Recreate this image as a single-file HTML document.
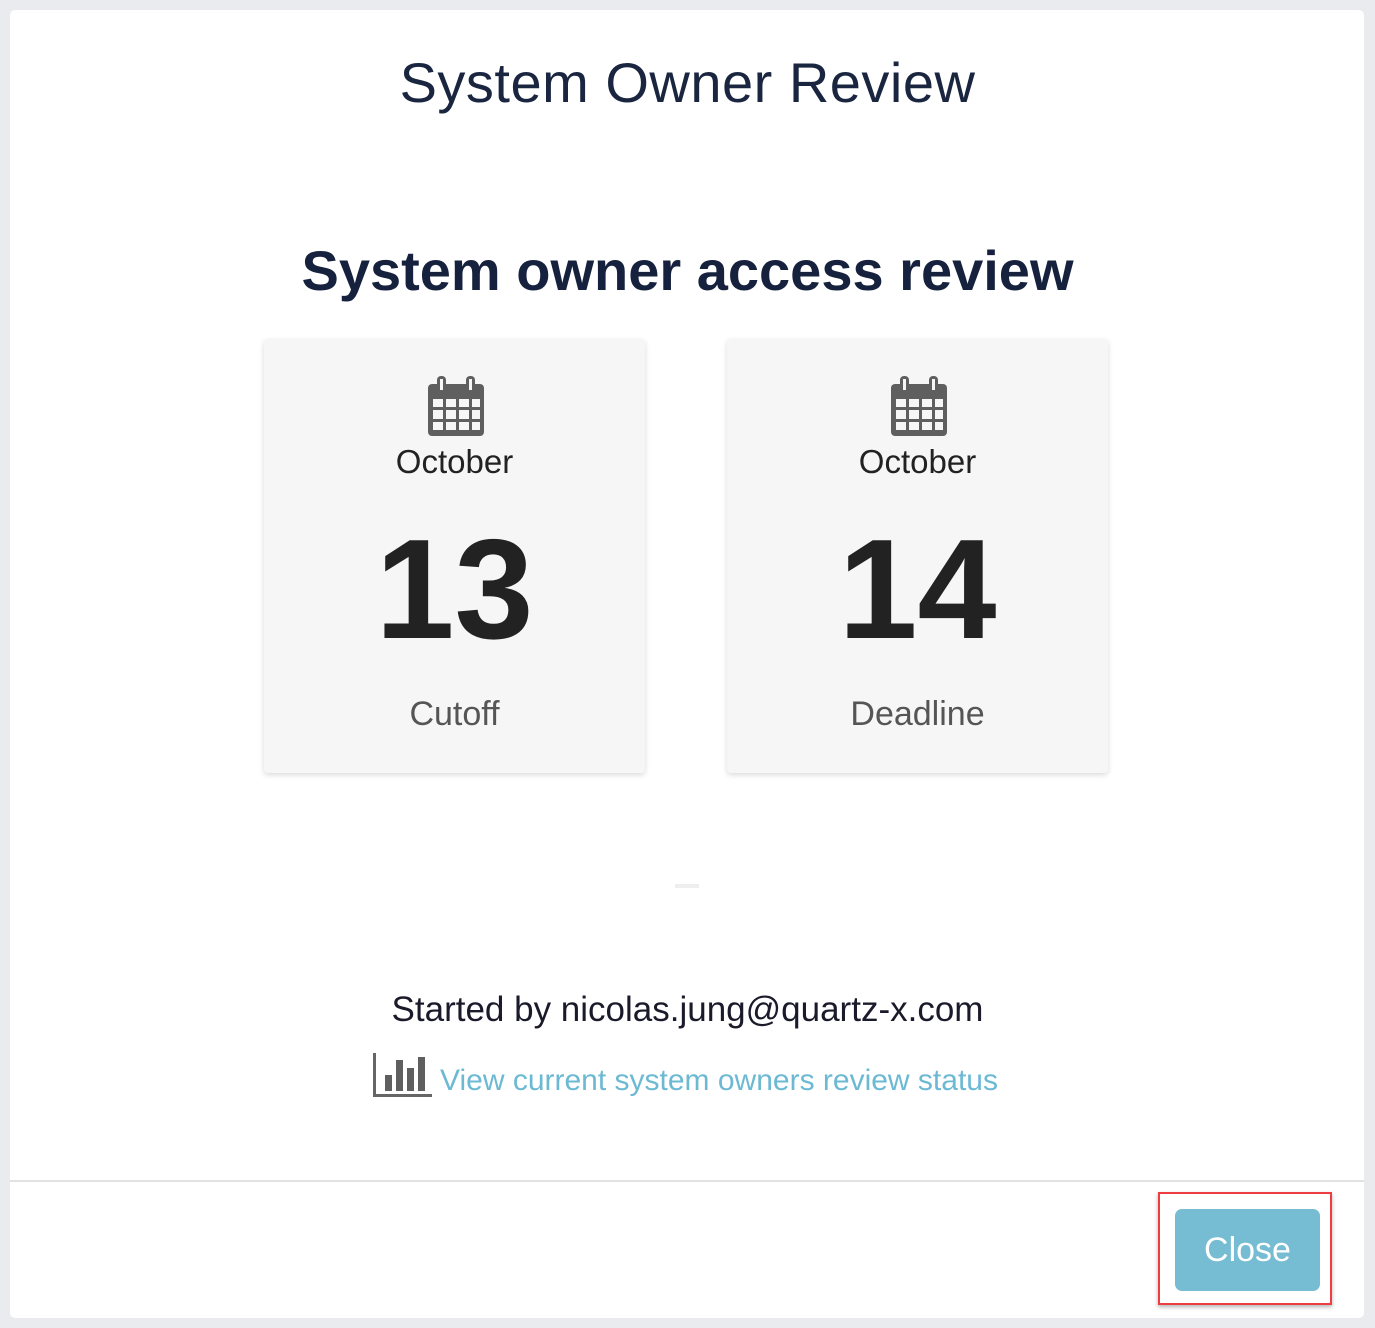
<!DOCTYPE html>
<html><head><style>
body{margin:0;width:1375px;height:1328px;background:#e9ebef;font-family:"Liberation Sans",sans-serif;position:relative;overflow:hidden}
.modal{position:absolute;left:10px;top:10px;width:1354px;height:1308px;background:#fff;border-radius:5px}
.abs{position:absolute}
.t1{left:0;width:1375px;text-align:center;top:50px;font-size:56px;color:#1a2540;font-weight:300;letter-spacing:0.5px}
.t2{left:0;width:1375px;text-align:center;top:238px;font-size:56px;color:#16213e;font-weight:bold}
.card{top:339px;width:381px;height:434px;background:#f6f6f6;border-radius:4px;box-shadow:0 2px 6px rgba(0,0,0,.15)}
.card .m{position:absolute;top:104px;width:100%;text-align:center;font-size:33px;color:#222}
.card .d{position:absolute;top:176px;width:100%;text-align:center;font-size:142px;font-weight:bold;color:#222;line-height:150px}
.card .l{position:absolute;top:356px;width:100%;text-align:center;font-size:34px;color:#555}
.card svg{position:absolute;left:164px;top:37px}
</style></head><body>
<div class="modal"></div>
<div class="abs t1">System Owner Review</div>
<div class="abs t2">System owner access review</div>
<div class="abs card" style="left:264px">
<svg width="56" height="60" viewBox="0 0 56 60"><rect x="0" y="8" width="56" height="52" rx="4" fill="#5f5f5f"/><rect x="9" y="0" width="9" height="17" rx="4" fill="#5f5f5f"/><rect x="38" y="0" width="9" height="17" rx="4" fill="#5f5f5f"/><rect x="12" y="3" width="3" height="11" fill="#f6f6f6"/><rect x="41" y="3" width="3" height="11" fill="#f6f6f6"/><g fill="#f6f6f6"><rect x="5" y="23" width="10" height="8"/><rect x="18" y="23" width="10" height="8"/><rect x="31" y="23" width="10" height="8"/><rect x="44" y="23" width="8" height="8"/><rect x="5" y="34" width="10" height="9"/><rect x="18" y="34" width="10" height="9"/><rect x="31" y="34" width="10" height="9"/><rect x="44" y="34" width="8" height="9"/><rect x="5" y="46" width="10" height="8"/><rect x="18" y="46" width="10" height="8"/><rect x="31" y="46" width="10" height="8"/><rect x="44" y="46" width="8" height="8"/></g></svg>
<div class="m">October</div><div class="d">13</div><div class="l">Cutoff</div></div>
<div class="abs card" style="left:727px">
<svg width="56" height="60" viewBox="0 0 56 60"><rect x="0" y="8" width="56" height="52" rx="4" fill="#5f5f5f"/><rect x="9" y="0" width="9" height="17" rx="4" fill="#5f5f5f"/><rect x="38" y="0" width="9" height="17" rx="4" fill="#5f5f5f"/><rect x="12" y="3" width="3" height="11" fill="#f6f6f6"/><rect x="41" y="3" width="3" height="11" fill="#f6f6f6"/><g fill="#f6f6f6"><rect x="5" y="23" width="10" height="8"/><rect x="18" y="23" width="10" height="8"/><rect x="31" y="23" width="10" height="8"/><rect x="44" y="23" width="8" height="8"/><rect x="5" y="34" width="10" height="9"/><rect x="18" y="34" width="10" height="9"/><rect x="31" y="34" width="10" height="9"/><rect x="44" y="34" width="8" height="9"/><rect x="5" y="46" width="10" height="8"/><rect x="18" y="46" width="10" height="8"/><rect x="31" y="46" width="10" height="8"/><rect x="44" y="46" width="8" height="8"/></g></svg>
<div class="m">October</div><div class="d">14</div><div class="l">Deadline</div></div>
<div class="abs" style="left:675px;top:884px;width:24px;height:4px;background:#eee"></div>
<div class="abs" style="left:0;width:1375px;text-align:center;top:990px;font-size:35px;color:#1a1a2a">Started by nicolas.jung@quartz-x.com</div>
<svg class="abs" style="left:373px;top:1053px" width="60" height="44" viewBox="0 0 60 44"><rect x="0" y="0" width="3" height="44" fill="#666"/><rect x="0" y="41" width="59" height="3" fill="#666"/><rect x="12" y="22" width="7" height="16" fill="#5f5f5f"/><rect x="23" y="7" width="7" height="31" fill="#5f5f5f"/><rect x="34" y="15" width="7" height="23" fill="#5f5f5f"/><rect x="45" y="4" width="7" height="34" fill="#5f5f5f"/></svg>
<div class="abs" style="left:440px;top:1064px;font-size:30px;color:#6cb9d3">View current system owners review status</div>
<div class="abs" style="left:10px;top:1180px;width:1354px;height:2px;background:#e2e2e2"></div>
<div class="abs" style="left:1158px;top:1192px;width:170px;height:109px;border:2px solid #ef3e42;box-shadow:0 2px 4px rgba(0,0,0,.3)"></div>
<div class="abs" style="left:1175px;top:1209px;width:145px;height:82px;background:#76bcd2;border-radius:7px;color:#fff;font-size:34px;text-align:center;line-height:82px">Close</div>
</body></html>
